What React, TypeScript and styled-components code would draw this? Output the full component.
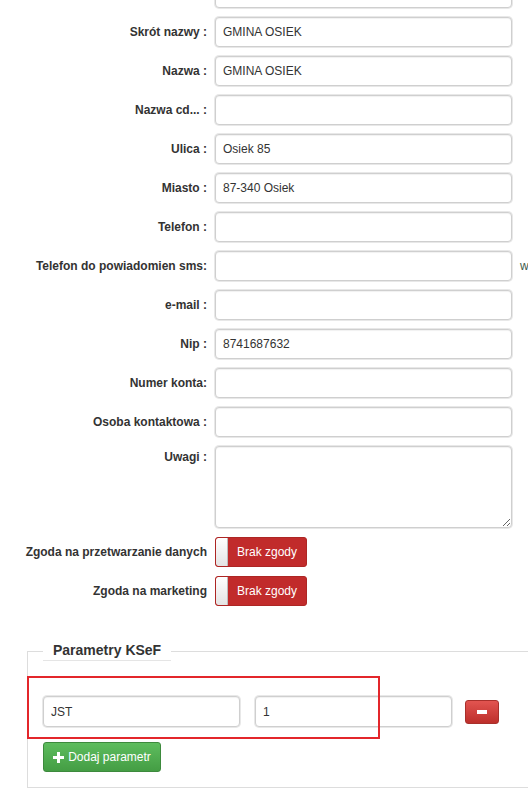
import React from "react";
import styled, { createGlobalStyle } from "styled-components";

const GlobalStyle = createGlobalStyle`
  html, body {
    margin: 0;
    padding: 0;
    background: #fff;
    overflow: hidden;
  }
  body {
    font-family: "Liberation Sans", Arial, sans-serif;
    font-size: 12px;
    color: #333;
  }
`;

const Viewport = styled.div`
  width: 528px;
  height: 791px;
  overflow: hidden;
`;

const Page = styled.div`
  margin-top: -22px;
  width: 600px;
`;

const Row = styled.div<{ $top?: boolean; $last?: boolean }>`
  display: grid;
  grid-template-columns: 207px 297px auto;
  column-gap: 8px;
  align-items: ${(p) => (p.$top ? "start" : "center")};
  margin-bottom: ${(p) => (p.$last ? "0" : "9px")};
`;

const Label = styled.label<{ $top?: boolean }>`
  text-align: right;
  font-weight: bold;
  font-size: 12px;
  color: #333;
  white-space: nowrap;
  padding-top: ${(p) => (p.$top ? "4px" : "0")};
`;

const Input = styled.input`
  box-sizing: border-box;
  width: 100%;
  height: 30px;
  padding: 0 7px;
  font-family: "Liberation Sans", Arial, sans-serif;
  font-size: 12px;
  color: #333;
  background: #fff;
  border: 1px solid #cfcfcf;
  border-radius: 4px;
  box-shadow: 0 0 0 1px #e8e8e8, inset 0 1px 1px rgba(0, 0, 0, 0.06);
  outline: none;
`;

const TextArea = styled.textarea`
  box-sizing: border-box;
  width: 100%;
  height: 82px;
  padding: 6px 7px;
  font-family: "Liberation Sans", Arial, sans-serif;
  font-size: 12px;
  border: 1px solid #cfcfcf;
  border-radius: 4px;
  box-shadow: 0 0 0 1px #e8e8e8, inset 0 1px 1px rgba(0, 0, 0, 0.06);
  outline: none;
  display: block;
`;

const Aside = styled.span`
  font-size: 12px;
  color: #3d5a4a;
`;

const Switch = styled.div`
  box-sizing: border-box;
  display: flex;
  width: 92px;
  height: 30px;
  border: 1px solid #ad2624;
  border-radius: 3px;
  background: #c12b2b;
  overflow: hidden;
`;

const Knob = styled.span`
  width: 11px;
  flex: none;
  background: linear-gradient(to bottom, #ffffff, #e4e4e4);
  border-right: 1px solid #bdbdbd;
  border-radius: 2px 0 0 2px;
`;

const SwitchText = styled.span`
  flex: 1;
  display: flex;
  align-items: center;
  justify-content: center;
  color: #fff;
  font-size: 12px;
`;

const Fieldset = styled.fieldset`
  box-sizing: border-box;
  margin: 35px 0 0 27px;
  width: 540px;
  padding: 0 15px 15px;
  border: 1px solid #dddddd;
  border-right: none;
  min-inline-size: 0;
`;

const Legend = styled.legend`
  padding: 0 10px;
  font-size: 14px;
  font-weight: bold;
  line-height: 19px;
  color: #333;
  border-bottom: 1px solid #e5e5e5;
`;

const ParamRow = styled.div`
  position: relative;
  display: flex;
  align-items: center;
  margin-top: 35px;
`;

const ParamInput = styled(Input)`
  width: 197px;
  height: 31px;
  margin-right: 15px;
`;

const Highlight = styled.div`
  position: absolute;
  left: -16px;
  top: -20px;
  width: 353px;
  height: 63px;
  box-sizing: border-box;
  border: 2px solid #e3262b;
  pointer-events: none;
`;

const RemoveButton = styled.button`
  box-sizing: border-box;
  width: 34px;
  height: 24px;
  margin-left: -2px;
  border: 1px solid #a8302b;
  border-radius: 3px;
  background: linear-gradient(to bottom, #e25450, #bd2f2b);
  display: flex;
  align-items: center;
  justify-content: center;
  padding: 0;
`;

const MinusBar = styled.span`
  width: 10px;
  height: 4px;
  background: #fff;
`;

const AddButton = styled.button`
  box-sizing: border-box;
  margin-top: 15px;
  width: 118px;
  height: 30px;
  border: 1px solid #3d8a3d;
  border-radius: 3px;
  background: linear-gradient(to bottom, #5ebd5e, #449d44);
  color: #fff;
  font-family: "Liberation Sans", Arial, sans-serif;
  font-size: 12px;
  display: flex;
  align-items: center;
  justify-content: center;
  gap: 4px;
  padding: 0;
`;

const fields: { label: string; value?: string }[] = [
  { label: "", value: "" },
  { label: "Skrót nazwy :", value: "GMINA OSIEK" },
  { label: "Nazwa :", value: "GMINA OSIEK" },
  { label: "Nazwa cd... :" },
  { label: "Ulica :", value: "Osiek 85" },
  { label: "Miasto :", value: "87-340 Osiek" },
  { label: "Telefon :" },
  { label: "Telefon do powiadomien sms:" },
  { label: "e-mail :" },
  { label: "Nip :", value: "8741687632" },
  { label: "Numer konta:" },
  { label: "Osoba kontaktowa :" },
];

const Plus = () => (
  <svg width="11" height="11" viewBox="0 0 11 11">
    <path d="M4 0h3v4h4v3H7v4H4V7H0V4h4z" fill="#fff" />
  </svg>
);

const Consent = ({ label, last }: { label: string; last?: boolean }) => (
  <Row $last={last}>
    <Label>{label}</Label>
    <Switch>
      <Knob />
      <SwitchText>Brak zgody</SwitchText>
    </Switch>
    <span />
  </Row>
);

export default function App() {
  return (
    <>
      <GlobalStyle />
      <Viewport>
        <Page>
          {fields.map((f, i) => (
            <Row key={i}>
              <Label>{f.label}</Label>
              <Input defaultValue={f.value ?? ""} />
              {f.label.startsWith("Telefon do") ? <Aside>w</Aside> : <span />}
            </Row>
          ))}
          <Row $top>
            <Label $top>Uwagi :</Label>
            <TextArea />
            <span />
          </Row>
          <Consent label="Zgoda na przetwarzanie danych" />
          <Consent label="Zgoda na marketing" last />
          <Fieldset>
            <Legend>Parametry KSeF</Legend>
            <ParamRow>
              <Highlight />
              <ParamInput defaultValue="JST" />
              <ParamInput defaultValue="1" />
              <RemoveButton>
                <MinusBar />
              </RemoveButton>
            </ParamRow>
            <AddButton>
              <Plus />
              Dodaj parametr
            </AddButton>
          </Fieldset>
        </Page>
      </Viewport>
    </>
  );
}
